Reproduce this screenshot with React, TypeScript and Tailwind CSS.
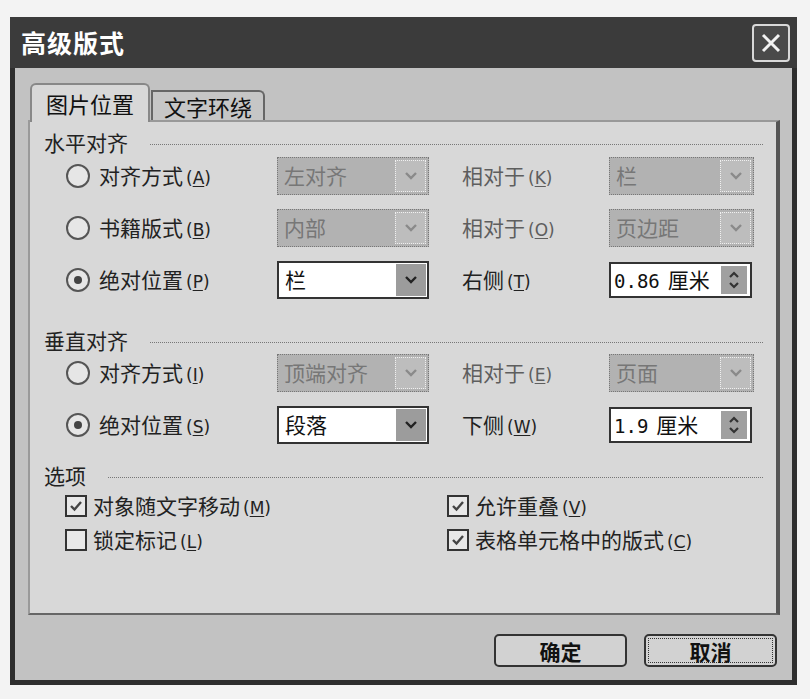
import type { ReactNode } from 'react';

const FONT = { fontFamily: '"Noto Sans CJK SC", "Noto Sans", sans-serif' };

// mnemonic like (A) with underlined letter
function Key({ k }: { k: string }) {
  return (
    <span className="ml-[3px] text-[17px]" style={{ fontFamily: '"DejaVu Sans", sans-serif' }}>
      (<span className="underline underline-offset-2">{k}</span>)
    </span>
  );
}

function Radio({ checked }: { checked?: boolean }) {
  return (
    <span className="w-[24px] h-[24px] rounded-full border-2 border-[#555] bg-[#e6e6e6] flex items-center justify-center shrink-0">
      {checked && <span className="w-[8px] h-[8px] rounded-full bg-[#444]" />}
    </span>
  );
}

function Check({ checked }: { checked?: boolean }) {
  return (
    <span className="w-[22px] h-[22px] border-2 border-[#333] bg-[#e8e8e8] flex items-center justify-center shrink-0">
      {checked && (
        <svg width="14" height="12" viewBox="0 0 14 12">
          <path d="M2 6 L5.5 9.5 L12 2" fill="none" stroke="#444" strokeWidth="2.4" />
        </svg>
      )}
    </span>
  );
}

function Chevron({ color }: { color: string }) {
  return (
    <svg width="14" height="10" viewBox="0 0 14 10">
      <path d="M2 2 L7 7 L12 2" fill="none" stroke={color} strokeWidth="2.4" />
    </svg>
  );
}

function Combo({ value, disabled, width }: { value: string; disabled?: boolean; width: string }) {
  if (disabled) {
    return (
      <div className={`${width} h-[38px] border border-dotted border-[#777] bg-[#b2b2b2] flex items-center`}>
        <span className="flex-1 pl-[6px] text-[21px] text-[#777]">{value}</span>
        <span className="w-[31px] h-[32px] mr-[2px] border border-dotted border-[#f0f0f0] bg-[#bdbdbd] flex items-center justify-center">
          <Chevron color="#8a8a8a" />
        </span>
      </div>
    );
  }
  return (
    <div className={`${width} h-[38px] border-2 border-[#333] bg-white flex items-center`}>
      <span className="flex-1 pl-[6px] text-[21px] text-[#111]">{value}</span>
      <span className="w-[30px] h-[32px] mr-[1px] bg-[#9c9c9c] flex items-center justify-center">
        <Chevron color="#222" />
      </span>
    </div>
  );
}

function Spin({ value }: { value: string }) {
  return (
    <div className="w-[143px] h-[36px] border-2 border-[#333] bg-white flex items-center">
      <span className="flex-1 pl-[3px] text-[21px] text-[#111]">
        <span style={{ fontFamily: '"DejaVu Sans Mono", monospace' }} className="text-[19px] mr-[8px]">{value}</span>厘米
      </span>
      <span className="w-[26px] h-[28px] mr-[3px] bg-[#a0a0a0] flex flex-col items-center justify-center gap-[2px]">
        <svg width="12" height="8" viewBox="0 0 12 8"><path d="M2 6 L6 2 L10 6" fill="none" stroke="#333" strokeWidth="2.2" /></svg>
        <svg width="12" height="8" viewBox="0 0 12 8"><path d="M2 2 L6 6 L10 2" fill="none" stroke="#333" strokeWidth="2.2" /></svg>
      </span>
    </div>
  );
}

function Header({ title, className }: { title: string; className?: string }) {
  return (
    <div className={`h-6 flex items-center pl-[14px] pr-[13px] ${className ?? ''}`}>
      <span className="text-[21px] text-[#222] leading-none">{title}</span>
      <span className="flex-1 ml-[22px] mt-[4px] border-t border-dotted border-[#777]" />
    </div>
  );
}

function Row({ label, k, checked, children }: { label: string; k: string; checked?: boolean; children: ReactNode }) {
  return (
    <div className="h-[38px] pl-[36px] grid grid-cols-[211px_185px_147px_145px] items-center">
      <div className="flex items-center gap-[9px] text-[21px] text-[#222]">
        <Radio checked={checked} />
        <span>{label}<Key k={k} /></span>
      </div>
      {children}
    </div>
  );
}

function Label({ text, k, dim }: { text: string; k: string; dim?: boolean }) {
  return (
    <span className={`text-[21px] ${dim ? 'text-[#5e5e5e]' : 'text-[#222]'}`}>
      {text}<Key k={k} />
    </span>
  );
}

function CheckItem({ label, k, checked }: { label: string; k: string; checked?: boolean }) {
  return (
    <div className="flex items-center gap-[6px] text-[21px] text-[#222]">
      <Check checked={checked} />
      <span>{label}<Key k={k} /></span>
    </div>
  );
}

export default function App() {
  return (
    <div className="w-[810px] h-[699px] bg-[#f3f3f3] pt-[17px] pl-[10px]" style={FONT}>
      <div className="w-[787px] border-[5px] border-t-0 border-[#2e2e2e] bg-[#c2c2c2]">
        {/* Title bar */}
        <div className="h-[51px] -mx-[5px] bg-[#3b3b3b] flex items-center justify-between pl-[11px] pr-[7px]">
          <span className="text-white text-[25px] font-bold tracking-[1px]">高级版式</span>
          <span className="w-[38px] h-[38px] border-2 border-[#d8d8d8] rounded-[4px] bg-[#4a4a4a] flex items-center justify-center">
            <svg width="22" height="22" viewBox="0 0 22 22">
              <path d="M3 3 L19 19 M19 3 L3 19" stroke="#f2f2f2" strokeWidth="3" />
            </svg>
          </span>
        </div>

        <div className="pl-[13px] pr-[12px] pt-[15px] pb-[13px]">
          {/* Tabs */}
          <div className="flex items-end h-[37px] pl-[2px] relative z-10">
            <div className="h-[39px] w-[120px] -mb-[2px] bg-[#d8d8d8] border-2 border-b-0 border-[#888] rounded-t-[6px] flex items-center justify-center text-[22px] text-[#111]">
              图片位置
            </div>
            <div className="h-[30px] w-[114px] ml-[1px] bg-[#c6c6c6] border-2 border-b-0 border-[#666] rounded-tr-[6px] flex items-center justify-center text-[22px] text-[#111]">
              文字环绕
            </div>
          </div>

          {/* Panel */}
          <div className="h-[495px] bg-[#d8d8d8] border-2 border-[#999] border-r-[4px] border-r-[#555] border-b-[#666] pt-[8px]">
            <Header title="水平对齐" />
            <div className="mt-[3px] flex flex-col gap-[14px]">
              <Row label="对齐方式" k="A">
                <Combo value="左对齐" disabled width="w-[152px]" />
                <Label text="相对于" k="K" dim />
                <Combo value="栏" disabled width="w-[145px]" />
              </Row>
              <Row label="书籍版式" k="B">
                <Combo value="内部" disabled width="w-[152px]" />
                <Label text="相对于" k="O" dim />
                <Combo value="页边距" disabled width="w-[145px]" />
              </Row>
              <Row label="绝对位置" k="P" checked>
                <Combo value="栏" width="w-[152px]" />
                <Label text="右侧" k="T" />
                <Spin value="0.86" />
              </Row>
            </div>

            <Header title="垂直对齐" className="mt-[29px]" />
            <div className="mt-[2px] flex flex-col gap-[14px]">
              <Row label="对齐方式" k="I">
                <Combo value="顶端对齐" disabled width="w-[152px]" />
                <Label text="相对于" k="E" dim />
                <Combo value="页面" disabled width="w-[145px]" />
              </Row>
              <Row label="绝对位置" k="S" checked>
                <Combo value="段落" width="w-[152px]" />
                <Label text="下侧" k="W" />
                <Spin value="1.9" />
              </Row>
            </div>

            <Header title="选项" className="mt-[19px]" />
            <div className="mt-[4px] pl-[35px] grid grid-cols-[382px_1fr] gap-y-[4px]">
              <div className="h-[30px] flex items-center"><CheckItem label="对象随文字移动" k="M" checked /></div>
              <div className="h-[30px] flex items-center"><CheckItem label="允许重叠" k="V" checked /></div>
              <div className="h-[30px] flex items-center"><CheckItem label="锁定标记" k="L" /></div>
              <div className="h-[30px] flex items-center"><CheckItem label="表格单元格中的版式" k="C" checked /></div>
            </div>
          </div>

          {/* Buttons */}
          <div className="mt-[19px] flex justify-end gap-[17px] pr-[3px]">
            <button className="w-[133px] h-[33px] rounded-[5px] border-2 border-[#333] bg-[#d2d2d2] text-[21px] text-[#111] font-bold">
              确定
            </button>
            <button className="w-[133px] h-[33px] rounded-[5px] border-2 border-[#333] bg-[#d2d2d2] text-[21px] text-[#111] font-bold p-[2px]">
              <span className="block w-full h-full border border-dotted border-[#333] leading-[25px]">取消</span>
            </button>
          </div>
        </div>
      </div>
    </div>
  );
}
